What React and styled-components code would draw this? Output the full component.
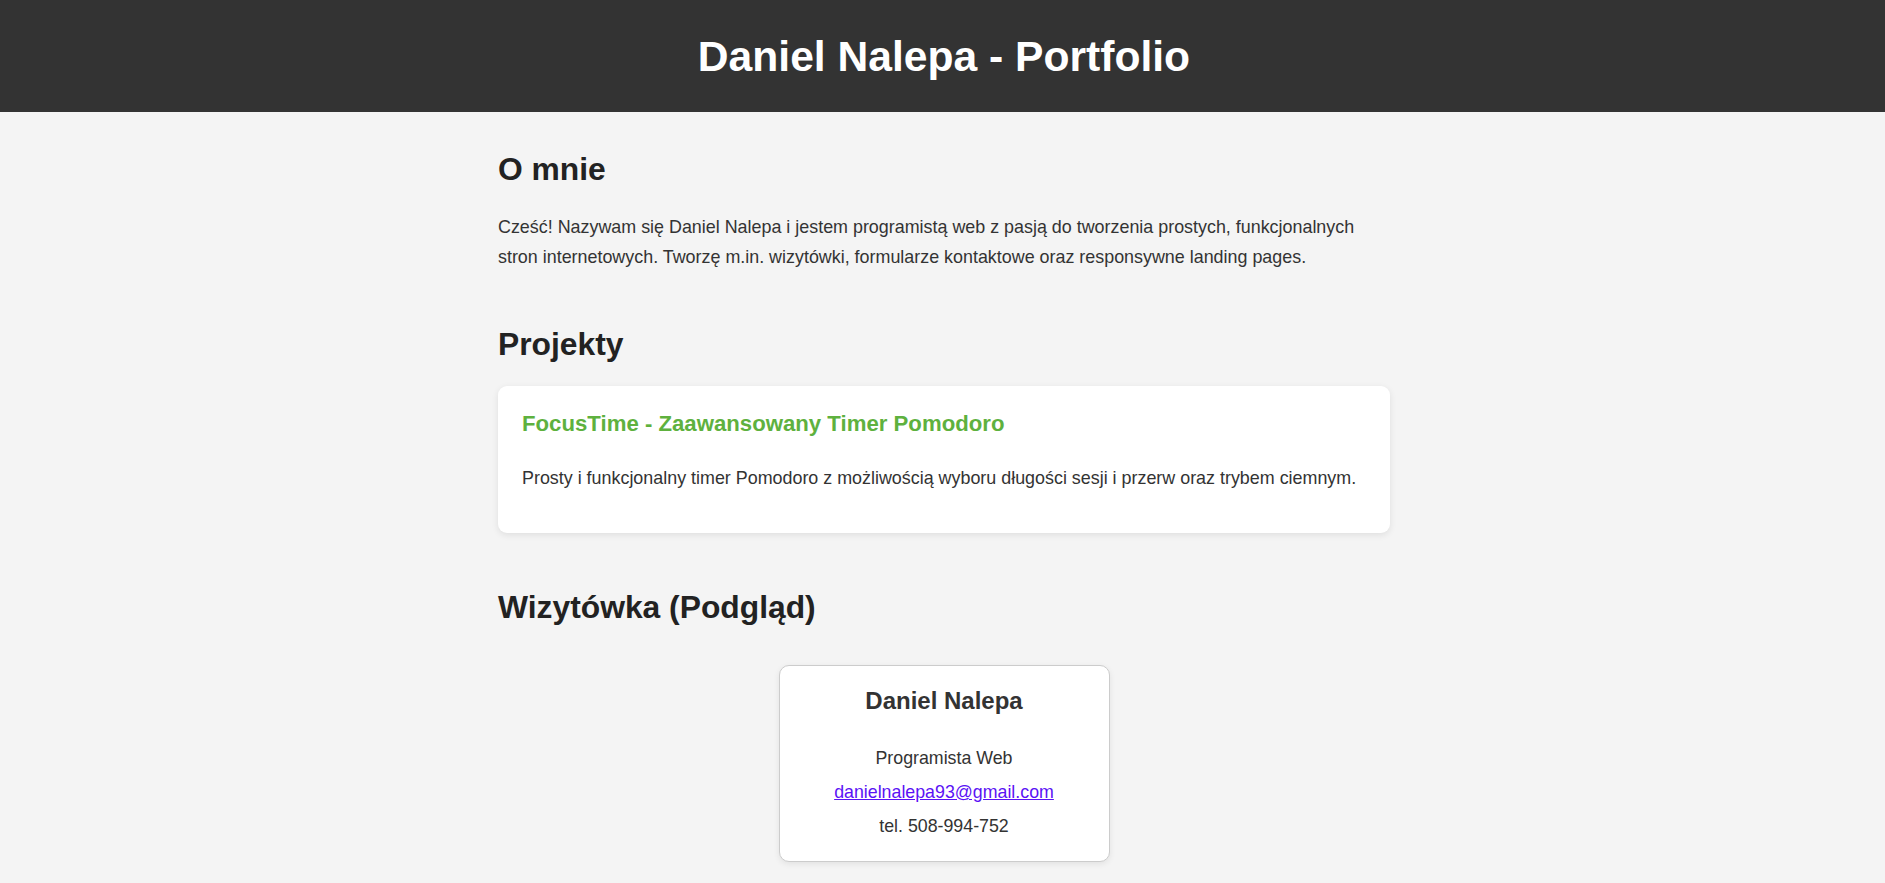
import React from "react";
import styled, { createGlobalStyle } from "styled-components";

const GlobalStyle = createGlobalStyle`
  html, body {
    margin: 0;
    padding: 0;
  }
  body {
    background: #f4f4f4;
    color: #333333;
    font-family: "Liberation Sans", Arial, Helvetica, sans-serif;
  }
  * { box-sizing: border-box; }
`;

const Header = styled.header`
  height: 112px;
  background: #333333;
  display: flex;
  align-items: center;
  justify-content: center;
  padding-left: 3px;
`;

const Title = styled.h1`
  margin: 0;
  color: #ffffff;
  font-size: 42.6px;
  font-weight: 700;
  line-height: 50px;
`;

const Content = styled.div`
  padding-left: 3px;
`;

const Main = styled.main`
  width: 892px;
  margin: 0 auto;
  padding-top: 38px;
  padding-bottom: 40px;
`;

const Section = styled.section`
  display: flex;
  flex-direction: column;
  margin-bottom: ${(p) => p.$after || 0}px;
`;

const SectionTitle = styled.h2`
  margin: 0 0 ${(p) => p.$gap}px;
  font-size: 31.8px;
  line-height: 38px;
  font-weight: 700;
  color: #222222;
`;

const Text = styled.p`
  margin: 0;
  font-size: 17.9px;
  line-height: 30px;
  color: #333333;
`;

const ProjectCard = styled.article`
  background: #ffffff;
  border-radius: 9px;
  box-shadow: 0 2px 7px rgba(0, 0, 0, 0.09);
  padding: 24px 24px 40px;
`;

const ProjectTitle = styled.h3`
  margin: 0 0 25px;
  font-size: 22.2px;
  line-height: 28px;
  font-weight: 700;
  color: #5eb13e;
`;

const CardWrap = styled.div`
  display: flex;
  justify-content: center;
`;

const BusinessCard = styled.div`
  width: 331px;
  background: #ffffff;
  border: 1px solid #cccccc;
  border-radius: 10px;
  box-shadow: 0 2px 6px rgba(0, 0, 0, 0.08);
  padding: 21px 16px 21px;
  display: flex;
  flex-direction: column;
  align-items: center;
  text-align: center;
`;

const CardName = styled.h3`
  margin: 0 0 29px;
  font-size: 24px;
  line-height: 28px;
  font-weight: 700;
  color: #333333;
`;

const CardLines = styled.div`
  display: flex;
  flex-direction: column;
  align-items: center;
  gap: 6px;
`;

const CardLine = styled.p`
  margin: 0;
  font-size: 17.8px;
  line-height: 28px;
  color: #333333;
`;

const Mail = styled.a`
  color: #5b12f5;
  text-decoration: underline;
`;

export default function App() {
  return (
    <>
      <GlobalStyle />
      <Header>
        <Title>Daniel Nalepa - Portfolio</Title>
      </Header>
      <Content>
        <Main>
          <Section $after={53}>
            <SectionTitle $gap={24}>O mnie</SectionTitle>
            <Text>
              Cześć! Nazywam się Daniel Nalepa i jestem programistą web z pasją do
              tworzenia prostych, funkcjonalnych stron internetowych. Tworzę m.in.
              wizytówki, formularze kontaktowe oraz responsywne landing pages.
            </Text>
          </Section>
          <Section $after={55}>
            <SectionTitle $gap={23}>Projekty</SectionTitle>
            <ProjectCard>
              <ProjectTitle>FocusTime - Zaawansowany Timer Pomodoro</ProjectTitle>
              <Text>
                Prosty i funkcjonalny timer Pomodoro z możliwością wyboru długości
                sesji i przerw oraz trybem ciemnym.
              </Text>
            </ProjectCard>
          </Section>
          <Section>
            <SectionTitle $gap={39}>Wizytówka (Podgląd)</SectionTitle>
            <CardWrap>
              <BusinessCard>
                <CardName>Daniel Nalepa</CardName>
                <CardLines>
                  <CardLine>Programista Web</CardLine>
                  <CardLine>
                    <Mail href="mailto:danielnalepa93@gmail.com">
                      danielnalepa93@gmail.com
                    </Mail>
                  </CardLine>
                  <CardLine>tel. 508-994-752</CardLine>
                </CardLines>
              </BusinessCard>
            </CardWrap>
          </Section>
        </Main>
      </Content>
    </>
  );
}
